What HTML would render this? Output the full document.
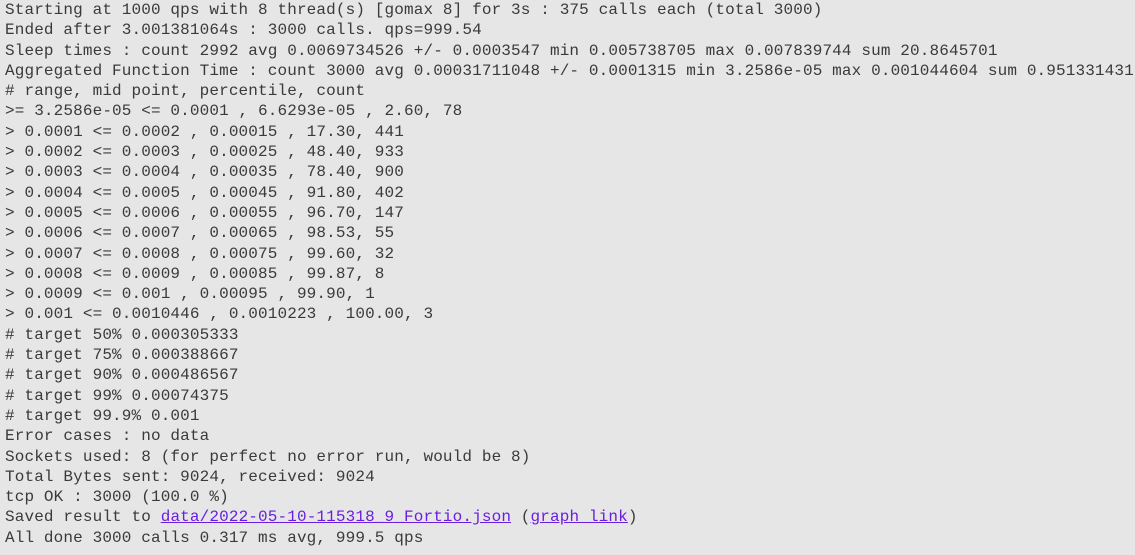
<!DOCTYPE html>
<html><head><meta charset="utf-8"><style>
html,body{margin:0;padding:0;background:#e6e6e6;width:1135px;height:555px;overflow:hidden}
pre{margin:0;position:absolute;left:5px;top:0px;font-family:"Liberation Mono",monospace;font-size:16px;line-height:20.3px;color:#3a3a3a;letter-spacing:0.13px;white-space:pre}
a{color:#6a1ee0;text-decoration:underline}
</style></head><body><pre>Starting at 1000 qps with 8 thread(s) [gomax 8] for 3s : 375 calls each (total 3000)
Ended after 3.001381064s : 3000 calls. qps=999.54
Sleep times : count 2992 avg 0.0069734526 +/- 0.0003547 min 0.005738705 max 0.007839744 sum 20.8645701
Aggregated Function Time : count 3000 avg 0.00031711048 +/- 0.0001315 min 3.2586e-05 max 0.001044604 sum 0.951331431
# range, mid point, percentile, count
&gt;= 3.2586e-05 &lt;= 0.0001 , 6.6293e-05 , 2.60, 78
&gt; 0.0001 &lt;= 0.0002 , 0.00015 , 17.30, 441
&gt; 0.0002 &lt;= 0.0003 , 0.00025 , 48.40, 933
&gt; 0.0003 &lt;= 0.0004 , 0.00035 , 78.40, 900
&gt; 0.0004 &lt;= 0.0005 , 0.00045 , 91.80, 402
&gt; 0.0005 &lt;= 0.0006 , 0.00055 , 96.70, 147
&gt; 0.0006 &lt;= 0.0007 , 0.00065 , 98.53, 55
&gt; 0.0007 &lt;= 0.0008 , 0.00075 , 99.60, 32
&gt; 0.0008 &lt;= 0.0009 , 0.00085 , 99.87, 8
&gt; 0.0009 &lt;= 0.001 , 0.00095 , 99.90, 1
&gt; 0.001 &lt;= 0.0010446 , 0.0010223 , 100.00, 3
# target 50% 0.000305333
# target 75% 0.000388667
# target 90% 0.000486567
# target 99% 0.00074375
# target 99.9% 0.001
Error cases : no data
Sockets used: 8 (for perfect no error run, would be 8)
Total Bytes sent: 9024, received: 9024
tcp OK : 3000 (100.0 %)
Saved result to <a>data/2022-05-10-115318_9_Fortio.json</a> (<a>graph link</a>)
All done 3000 calls 0.317 ms avg, 999.5 qps</pre></body></html>
